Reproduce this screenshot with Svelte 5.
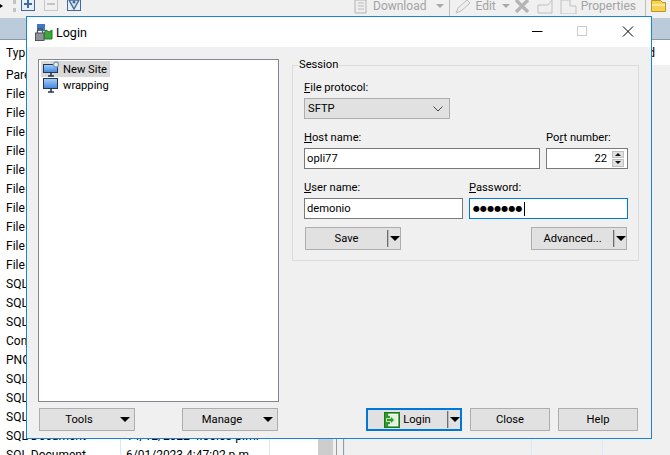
<script>
  let sites = [
    { name: 'New Site', isNew: true },
    { name: 'wrapping', isNew: false }
  ];
  let files = ['Pare', 'File', 'File', 'File', 'File', 'File', 'File', 'File', 'File', 'File', 'File', 'SQL', 'SQL', 'SQL', 'Con', 'PNG', 'SQL', 'SQL', 'SQL'];
  let lastRows = [
    { type: 'SQL Document', date: '14/12/2022 4:05:03 p.m.' },
    { type: 'SQL Document', date: '6/01/2023 4:47:02 p.m.' }
  ];
</script>

<div class="app">
  <div class="toolbar">
    <span class="mini"></span>
    <span class="grip"></span>
    <span class="tool plus">
      <svg width="12" height="10" viewBox="0 0 12 10"><path d="M6 0v8M2 4h8" stroke="#3f6a9a" stroke-width="2"/></svg>
    </span>
    <span class="tool minus">
      <svg width="12" height="10" viewBox="0 0 12 10"><path d="M2 4h8" stroke="#c4c4c4" stroke-width="2"/></svg>
    </span>
    <span class="tool filter">
      <svg width="12" height="10" viewBox="0 0 12 10"><path d="M1 0h10L6 9z" fill="#dbe6f2" stroke="#3f6a9a" stroke-width="1.400"/><circle cx="6" cy="2" r="1.500" fill="#3f6a9a"/></svg>
    </span>
    <svg class="ti dl" width="20" height="14" viewBox="0 0 20 14"><path d="M3 0h11v13H3z" fill="#eee" stroke="#b4b4b4"/><path d="M6 3h6M6 6h6M6 9h6" stroke="#bbb"/></svg>
    <span class="tb-text">Download</span>
    <span class="tb-arrow a1"></span>
    <span class="tb-sep s1"></span>
    <svg class="ti ed" width="18" height="14" viewBox="0 0 18 14"><path d="M2 13l2-5 9-8 3 3-9 8z" fill="#eee" stroke="#bdbdbd"/></svg>
    <span class="tb-text ml3">Edit</span>
    <span class="tb-arrow a2"></span>
    <svg class="ti x" width="16" height="13" viewBox="0 0 16 13"><path d="M2 0l12 12M14 0L2 12" stroke="#b5b5b5" stroke-width="3.400"/></svg>
    <svg class="ti d1" width="16" height="14" viewBox="0 0 16 14"><path d="M1 13V5h10l4-5v13z" fill="#efefef" stroke="#c0c0c0"/></svg>
    <svg class="ti d2" width="18" height="14" viewBox="0 0 18 14"><path d="M1 0h9v6h6v8H1z" fill="#efefef" stroke="#c0c0c0"/></svg>
    <span class="tb-text props">Properties</span>
    <span class="tb-sep s2"></span>
    <svg class="ti fold" width="15" height="12" viewBox="0 0 15 12"><path d="M0.500 0.500h9l2 2h3v9H0.500z" fill="#f5d34e" stroke="#b8962a"/><path d="M1 5h13" stroke="#fbe99a" stroke-width="2"/></svg>
  </div>
  <div class="band"></div>

  <div class="panes">
    <div class="files">
      <div class="row head">Typ</div>
      {#each files as row}
        <div class="row">{row}</div>
      {/each}
      {#each lastRows as row}
        <div class="row"><span class="c1">{row.type}</span><span>{row.date}</span></div>
      {/each}
    </div>
    <div class="scroll"></div>
    <div class="splitter"></div>
    <div class="pane-right">
      <div class="rhead">d</div>
      <div class="rcols">
        <span class="rc a"></span>
        <span class="rc b"></span>
      </div>
    </div>
  </div>

  <div class="dialog">
    <header class="titlebar">
      <svg class="logo" width="18" height="17" viewBox="0 0 18 17">
        <rect x="2" y="0" width="8" height="7" fill="#3c78c8"/>
        <path d="M9 9l2-3 3 2 3-2v9H9z" fill="#3da63d" stroke="#1c7a1c"/>
        <path d="M2.500 9V7a2.500 2.500 0 0 1 5 0v2" fill="none" stroke="#555" stroke-width="1.300"/>
        <rect x="0.500" y="9" width="8.500" height="7.500" fill="#8d949c" stroke="#555"/>
      </svg>
      <span class="title">Login</span>
      <span class="winbtns">
        <svg width="102" height="16" viewBox="0 0 102 16">
          <path d="M0 7.500h10.500" stroke="#000"/>
          <rect x="45.500" y="2.500" width="9" height="9" fill="none" stroke="#ccc"/>
          <path d="M91 2.500l10 10M101 2.500l-10 10" stroke="#000" fill="none"/>
        </svg>
      </span>
    </header>

    <div class="body">
      <div class="main">
        <div class="left">
          <ul class="tree">
            {#each sites as site}
              <li class:sel={site.isNew}>
                <svg width="18" height="16" viewBox="0 0 18 16">
                  <defs>
                    <linearGradient id="scr" x1="0" y1="0" x2="0" y2="1">
                      <stop offset="0" stop-color="#a9cff7"/>
                      <stop offset="1" stop-color="#3f86e0"/>
                    </linearGradient>
                  </defs>
                  <rect x="0.500" y="{site.isNew ? 3.500 : 1.500}" width="14" height="{site.isNew ? 8 : 10}" fill="url(#scr)" stroke="#26364e"/>
                  <path d="M5 15h6M8 12v3" stroke="#26364e" stroke-width="1.600"/>
                  {#if site.isNew}
                    <circle cx="13" cy="3.500" r="2.500" fill="#e6edf5" stroke="#7f9bb8" stroke-width="1.300"/>
                  {/if}
                </svg>
                <span>{site.name}</span>
              </li>
            {/each}
          </ul>
        </div>

        <fieldset class="session">
          <legend>Session</legend>
          <div class="field first">
            <label for="proto"><u>F</u>ile protocol:</label>
            <div id="proto" class="select">
              <span>SFTP</span>
              <svg width="10" height="6" viewBox="0 0 10 6"><path d="M0.500 0.500L5 5l4.500-4.500" fill="none" stroke="#444"/></svg>
            </div>
          </div>
          <div class="line gap">
            <div class="field grow">
              <label for="host"><u>H</u>ost name:</label>
              <div id="host" class="input">opli77</div>
            </div>
            <div class="field port">
              <label for="port">Po<u>r</u>t number:</label>
              <div id="port" class="input right">
                <span class="val">22</span>
                <span class="spin">
                  <i><b class="up"></b></i>
                  <i><b class="down"></b></i>
                </span>
              </div>
            </div>
          </div>
          <div class="line gap">
            <div class="field half">
              <label for="user"><u>U</u>ser name:</label>
              <div id="user" class="input">demonio</div>
            </div>
            <div class="field half">
              <label for="pass"><u>P</u>assword:</label>
              <div id="pass" class="input focus"><span class="dots">●●●●●●●</span><span class="caret"></span></div>
            </div>
          </div>
          <div class="line actions">
            <div class="btn split save">
              <span class="lbl">Save</span><span class="sep"></span><span class="arrow"></span>
            </div>
            <div class="btn split advanced">
              <span class="lbl">Advanced...</span><span class="sep"></span><span class="arrow"></span>
            </div>
          </div>
        </fieldset>
      </div>

      <div class="bottom">
        <div class="btn drop"><span class="lbl">Tools</span><span class="arrow"></span></div>
        <div class="btn drop manage"><span class="lbl">Manage</span><span class="arrow"></span></div>
        <div class="btn split login">
          <span class="lbl">
            <svg width="16" height="16" viewBox="0 0 16 16">
              <rect x="0.500" y="0.500" width="15" height="15" fill="#2f9a2a" stroke="#1c7a1c"/>
              <path d="M5 4V2.500h8.500v11H5V12" fill="none" stroke="#fff" stroke-width="1.400"/>
              <rect x="6" y="3" width="7" height="10" fill="#dff2da"/>
              <path d="M2.500 6.500h4V4l4 4-4 4V9.500h-4z" fill="#2f9a2a" stroke="#fff" stroke-width="0.700"/>
            </svg>
            <span>Login</span>
          </span><span class="sep"></span><span class="arrow"></span>
        </div>
        <div class="btn close">Close</div>
        <div class="btn help">Help</div>
      </div>
    </div>
  </div>
</div>

<style>
  :global(body) {
    margin: 0;
    background: #f0f0f0;
  }

  .app {
    position: relative;
    width: 670px;
    height: 455px;
    overflow: hidden;
    font-family: Roboto, "Liberation Sans", sans-serif;
    font-size: 11.200px;
    color: #000;
  }

  .toolbar {
    height: 18px;
    display: flex;
    align-items: flex-start;
    box-sizing: border-box;
    overflow: hidden;
  }
  .mini {
    width: 0;
    height: 0;
    margin-top: 4px;
    border-left: 3px solid #000;
    border-top: 2px solid transparent;
    border-bottom: 2px solid transparent;
  }
  .grip {
    width: 0;
    height: 12px;
    margin-left: 10px;
    border-left: 3px dotted #c4c4c4;
  }
  .tool {
    width: 12px;
    height: 10px;
    flex: none;
    border: 1px solid #3f6a9a;
    border-top: none;
    background: #e8eef5;
    display: flex;
  }
  .plus { margin-left: 5px; }
  .minus {
    margin-left: 9px;
    border-color: #c8c8c8;
    background: #f0f0f0;
  }
  .filter { margin-left: 9px; }
  .ti { flex: none; }
  .dl { margin-left: 271px; margin-right: 1px; }
  .tb-text {
    color: #a3a3a3;
    font-size: 12px;
    line-height: 14px;
    margin-top: -1px;
  }
  .tb-arrow {
    width: 0;
    height: 0;
    margin-top: 4px;
    border-left: 4px solid transparent;
    border-right: 4px solid transparent;
    border-top: 4px solid #a8a8a8;
  }
  .a1 { margin-left: 10px; }
  .a2 { margin-left: 6px; }
  .tb-sep {
    width: 1px;
    height: 16px;
    background: #bdbdbd;
  }
  .s1 { margin-left: 5px; }
  .ed { margin-left: 4px; }
  .ml3 { margin-left: 3px; }
  .x { margin-left: 4px; }
  .d1 { margin-left: 7px; }
  .d2 { margin-left: 7px; }
  .props { margin-left: 3px; }
  .s2 { margin-left: 9px; }
  .fold { margin-left: 5px; }

  .band {
    height: 21px;
    background: #bccbda;
    border-bottom: 1px solid #8a97a5;
  }

  .panes {
    display: flex;
    height: 415px;
  }
  .files {
    width: 318px;
    flex: none;
    box-sizing: border-box;
    padding-left: 6px;
    background: linear-gradient(#dce8f5, #dce8f5) 120px 0 / 1px 100% no-repeat,
      linear-gradient(#dce8f5, #dce8f5) 269px 0 / 1px 100% no-repeat,
      #fff;
  }
  .row {
    height: 19px;
    line-height: 19px;
    font-size: 12px;
    white-space: nowrap;
    display: flex;
  }
  .row.head { height: 26px; line-height: 26px; }
  .c1 { width: 120px; }
  .scroll {
    width: 15px;
    flex: none;
    background: #cdcdcd;
  }
  .splitter {
    width: 6px;
    flex: none;
    margin-left: 3px;
    border-left: 1px solid #9a9a9a;
    border-right: 1px solid #9a9a9a;
  }
  .pane-right {
    flex: 1;
    display: flex;
    flex-direction: column;
    border-left: 1px solid #dce8f5;
  }
  .rhead {
    height: 25px;
    line-height: 26px;
    font-size: 12px;
    background: #fff;
    text-align: right;
    padding-right: 15px;
  }
  .rcols {
    flex: 1;
    display: flex;
  }
  .rc { border-right: 1px solid #dce8f5; }
  .rc.a { width: 186px; }
  .rc.b { width: 70px; }

  .dialog {
    position: absolute;
    left: 26px;
    top: 16px;
    width: 626px;
    height: 423px;
    box-sizing: border-box;
    border: 1px solid #1883d7;
    background: #f0f0f0;
    display: flex;
    flex-direction: column;
  }
  .titlebar {
    height: 30px;
    background: #fff;
    display: flex;
    align-items: center;
    padding-left: 8px;
    flex: none;
  }
  .logo { margin-right: 3px; flex: none; }
  .title { font-size: 12.500px; }
  .winbtns {
    margin-left: auto;
    margin-right: 17px;
    display: flex;
  }

  .body {
    flex: 1;
    display: flex;
    flex-direction: column;
    padding: 12px 12px 7px 11px;
    min-height: 0;
  }
  .main {
    flex: 1;
    display: flex;
    align-items: flex-start;
    gap: 13px;
    min-height: 0;
  }
  .left {
    width: 241px;
    height: 100%;
    display: flex;
  }
  .tree {
    flex: 1;
    margin: 0;
    padding: 1px 2px;
    list-style: none;
    background: #fff;
    border: 1px solid #828790;
  }
  .tree li {
    width: 67px;
    height: 16px;
    display: flex;
    align-items: center;
    gap: 2px;
    padding-left: 2px;
    white-space: nowrap;
  }
  .tree li svg { flex: none; }
  .tree li.sel { background: #d9d9d9; }

  .session {
    width: 347px;
    height: 202px;
    box-sizing: border-box;
    margin: 0;
    padding: 0 10px 0 11px;
    border: 1px solid #dcdcdc;
    min-inline-size: 0;
  }
  legend {
    padding: 0 1px;
    margin-left: -6px;
    line-height: 12px;
  }
  .first { margin-top: 9px; }
  label {
    display: block;
    line-height: 16px;
    height: 16px;
  }
  .select {
    width: 146px;
    height: 21px;
    box-sizing: border-box;
    border: 1px solid #adadad;
    background: #e1e1e1;
    display: flex;
    align-items: center;
    justify-content: space-between;
    padding: 0 6px 0 3px;
    margin-top: 2px;
  }
  .line { display: flex; }
  .gap { margin-top: 11px; gap: 6px; }
  .grow { width: 236px; }
  .port { width: 82px; }
  .half { width: 159px; }
  .input {
    height: 21px;
    box-sizing: border-box;
    border: 1px solid #7a7a7a;
    background: #fff;
    display: flex;
    align-items: center;
    padding-left: 2px;
    margin-top: 2px;
  }
  .input.right { justify-content: flex-end; padding: 0; }
  .val { margin-right: 5px; }
  .spin {
    width: 12px;
    height: 16px;
    display: flex;
    flex-direction: column;
    gap: 1px;
    margin-right: 3px;
  }
  .spin i {
    flex: 1;
    background: #e1e1e1;
    border: 1px solid #c0c0c0;
    display: flex;
    align-items: center;
    justify-content: center;
  }
  .spin b {
    width: 0;
    height: 0;
    border-left: 3px solid transparent;
    border-right: 3px solid transparent;
  }
  .spin b.up { border-bottom: 3px solid #111; }
  .spin b.down { border-top: 3px solid #111; }
  .input.focus { border-color: #0078d7; }
  .dots {
    font-family: "DejaVu Sans", sans-serif;
    font-size: 8px;
    letter-spacing: 0.100px;
    margin-left: 1px;
  }
  .caret {
    width: 1px;
    height: 14px;
    background: #000;
    margin-left: 1px;
  }
  .actions {
    margin-top: 8px;
    justify-content: space-between;
    padding: 0 1px;
  }

  .btn {
    height: 23px;
    box-sizing: border-box;
    border: 1px solid #adadad;
    background: #e1e1e1;
    display: flex;
    align-items: center;
    justify-content: center;
    white-space: nowrap;
  }
  .arrow {
    width: 0;
    height: 0;
    border-left: 5px solid transparent;
    border-right: 5px solid transparent;
    border-top: 5px solid #000;
  }
  .split { justify-content: flex-start; }
  .split .lbl {
    flex: 1;
    display: flex;
    justify-content: center;
    align-items: center;
    gap: 3px;
  }
  .split .lbl svg { flex: none; }
  .sep {
    width: 1px;
    height: 17px;
    background: #6e6e6e;
    border-right: 1px solid #bbb;
  }
  .split .arrow { margin: 0 0 0 1px; }
  .save, .advanced { width: 96px; }

  .bottom {
    display: flex;
    margin-top: 6px;
    padding-left: 1px;
  }
  .drop { width: 96px; }
  .drop .lbl { flex: 1; text-align: center; padding-right: 2px; }
  .drop .arrow { margin-right: 4px; }
  .manage { margin-left: 47px; }
  .login {
    width: 96px;
    margin-left: 88px;
    border: 2px solid #0078d7;
  }
  .close { width: 80px; margin-left: 8px; }
  .help { width: 80px; margin-left: 8px; }
</style>
